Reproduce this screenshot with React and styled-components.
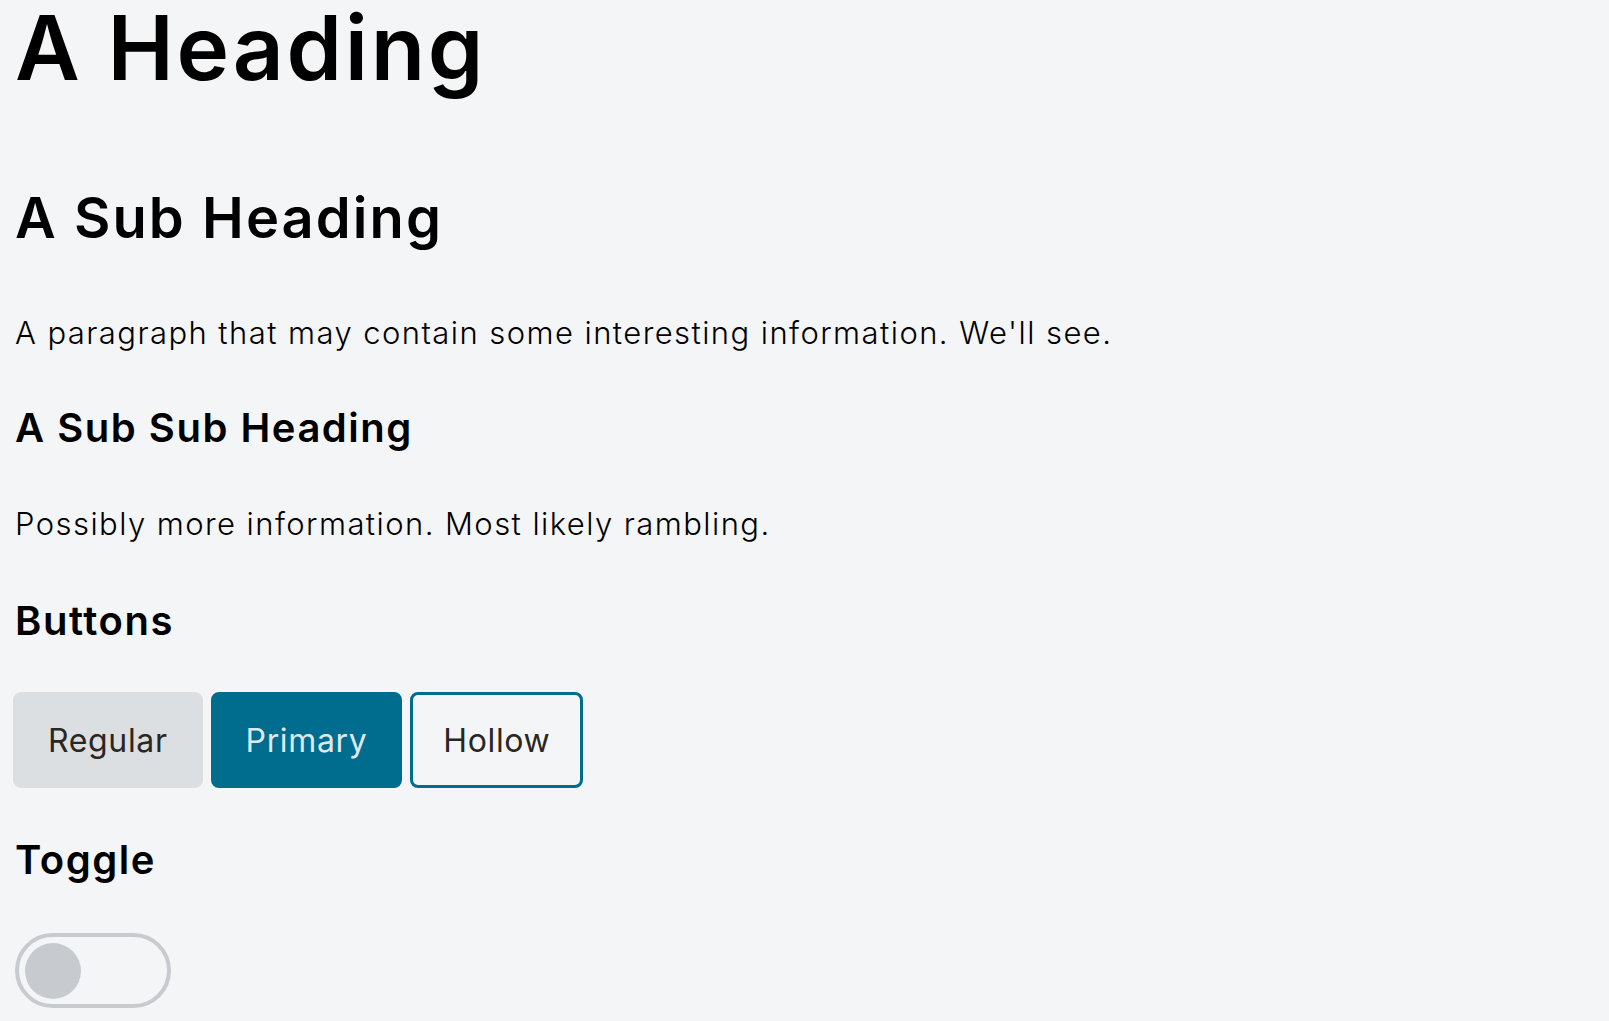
import React from "react";
import styled, { createGlobalStyle, css } from "styled-components";

const GlobalStyle = createGlobalStyle`
    * {
        box-sizing: border-box;
    }
    body {
        margin: 0;
        background: #f4f5f7;
        font-family: Inter, "Noto Sans", sans-serif;
        color: #000;
    }
`;

const Page = styled.main`
    padding: 0 13px;
`;

const Title = styled.h1`
    margin: 0 0 94px 2px;
    font-size: 89px;
    line-height: 1.08;
    font-weight: 600;
    letter-spacing: 0.03em;
`;

const SubTitle = styled.h2`
    margin: 0 0 71px 2px;
    font-size: 56px;
    line-height: 1;
    font-weight: 600;
    letter-spacing: 0.037em;
`;

const SectionTitle = styled.h3`
    margin: 0 0 ${(p) => p.$gap}px 2px;
    font-size: 40px;
    line-height: 1;
    font-weight: 600;
    letter-spacing: 0.038em;
`;

const Text = styled.p`
    margin: 0 0 ${(p) => p.$gap}px 2px;
    font-size: 31px;
    line-height: 1;
    font-weight: 300;
    letter-spacing: 0.046em;
`;

const ButtonRow = styled.div`
    display: flex;
    gap: 8px;
    margin-bottom: 52px;
`;

const variants = {
    regular: css`
        background: #dcdfe2;
        border-color: #dcdfe2;
        color: #2a2623;
    `,
    primary: css`
        background: #006d8f;
        border-color: #006d8f;
        color: #dfe8ec;
    `,
    hollow: css`
        background: transparent;
        border-color: #006d8f;
        color: #2a2623;
    `,
};

const Button = styled.button`
    height: 96px;
    padding: 0 ${(p) => (p.$variant === "hollow" ? 30 : 32)}px;
    border: 3px solid;
    border-radius: 8px;
    font-family: inherit;
    font-size: 32px;
    font-weight: 400;
    letter-spacing: 0.02em;
    cursor: pointer;
    ${(p) => variants[p.$variant]}
`;

const Track = styled.label`
    display: flex;
    align-items: center;
    width: 156px;
    height: 75px;
    margin-left: 2px;
    padding: 0 6px;
    border: 4px solid #c7cbcf;
    border-radius: 40px;
    cursor: pointer;
`;

const Knob = styled.span`
    width: 56px;
    height: 56px;
    border-radius: 50%;
    background: #c7cbcf;
`;

const App = () => {
    return (
        <>
            <GlobalStyle />
            <Page>
                <Title>A Heading</Title>
                <SubTitle>A Sub Heading</SubTitle>
                <Text $gap={60}>A paragraph that may contain some interesting information. We'll see.</Text>
                <SectionTitle $gap={60}>A Sub Sub Heading</SectionTitle>
                <Text $gap={62}>Possibly more information. Most likely rambling.</Text>
                <SectionTitle $gap={51}>Buttons</SectionTitle>
                <ButtonRow>
                    <Button $variant="regular">Regular</Button>
                    <Button $variant="primary">Primary</Button>
                    <Button $variant="hollow">Hollow</Button>
                </ButtonRow>
                <SectionTitle $gap={53}>Toggle</SectionTitle>
                <Track>
                    <Knob />
                </Track>
            </Page>
        </>
    );
};

export default App;
